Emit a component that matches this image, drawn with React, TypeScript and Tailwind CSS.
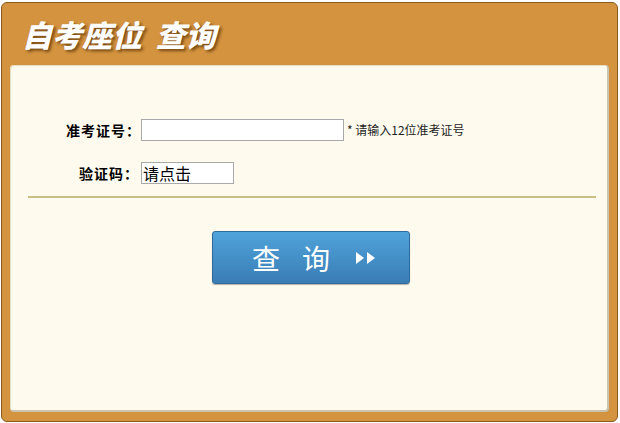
import React from "react";

const App = () => {
  return (
    <div className="w-[620px] h-[423px] bg-white pt-[2px] pl-[1px]">
      <div className="w-[617px] h-[420px] bg-[#d4943f] border border-[#8a5a1c] rounded-[6px] flex flex-col">
        <div className="h-[62px] flex items-center pl-[20px] pt-[1px]">
          <h1
            className="text-white text-[30px] font-black italic [text-shadow:2px_2px_3px_rgba(80,40,0,0.7)]"
            style={{ fontFamily: '"Noto Sans CJK SC", sans-serif' }}
          >
            自考座位&nbsp;&nbsp;查询
          </h1>
        </div>
        <div className="mx-[8px] mb-[9px] flex-1 bg-[#fefbee] rounded-[4px] border-r-2 border-b-2 border-[#c9c3b0] shadow-[inset_1px_1px_0_#e8dcc0] pt-[54px]">
          <div
            className="flex flex-col gap-[21px]"
            style={{ fontFamily: '"Noto Sans CJK SC", sans-serif' }}
          >
            <div className="flex items-center h-[22px]">
              <div className="w-[131px] pr-0 text-right text-[14px] font-bold text-black tracking-[1px]">
                准考证号：
              </div>
              <input
                type="text"
                className="w-[203px] h-[22px] bg-white border border-[#a9a9a9] outline-none"
              />
              <span className="ml-[3px] text-[12px] text-[#222]">* 请输入12位准考证号</span>
            </div>
            <div className="flex items-center h-[22px]">
              <div className="w-[131px] pr-[2px] text-right text-[14px] font-bold text-black tracking-[1px]">
                验证码：
              </div>
              <div className="w-[93px] h-[22px] bg-white border border-[#a9a9a9] text-[16px] leading-[20px] pl-[1px] text-black">
                请点击
              </div>
            </div>
          </div>
          <div className="ml-[18px] mr-[11px] mt-[12px] h-[2px] bg-[#cbbf85]" />
          <div className="flex justify-center mt-[33px] pl-[5px]">
            <button className="w-[198px] h-[53px] rounded-[3px] border border-[#2e6a9c] bg-gradient-to-b from-[#4fa3da] to-[#3a7db5] shadow-[0_1px_1px_rgba(0,0,0,0.3)] flex items-center justify-center text-white">
              <span
                className="text-[28px] tracking-[22px] ml-[8px]"
                style={{ fontFamily: '"Noto Sans CJK SC", sans-serif' }}
              >
                查询
              </span>
              <svg width="24" height="14" viewBox="0 0 24 14" className="ml-[2px]">
                <polygon points="2,1 10,7 2,13" fill="white" />
                <polygon points="13,1 21,7 13,13" fill="white" />
              </svg>
            </button>
          </div>
        </div>
      </div>
    </div>
  );
};

export default App;
